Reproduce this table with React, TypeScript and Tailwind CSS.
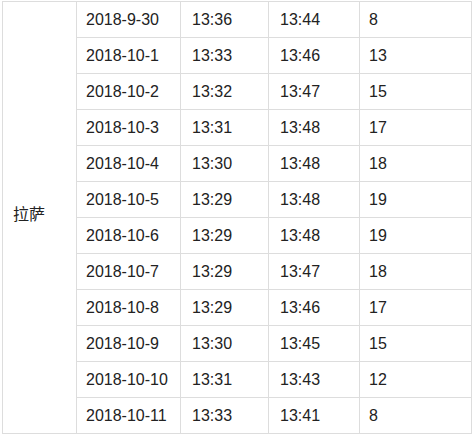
const rows = [
  ["2018-9-30", "13:36", "13:44", "8"],
  ["2018-10-1", "13:33", "13:46", "13"],
  ["2018-10-2", "13:32", "13:47", "15"],
  ["2018-10-3", "13:31", "13:48", "17"],
  ["2018-10-4", "13:30", "13:48", "18"],
  ["2018-10-5", "13:29", "13:48", "19"],
  ["2018-10-6", "13:29", "13:48", "19"],
  ["2018-10-7", "13:29", "13:47", "18"],
  ["2018-10-8", "13:29", "13:46", "17"],
  ["2018-10-9", "13:30", "13:45", "15"],
  ["2018-10-10", "13:31", "13:43", "12"],
  ["2018-10-11", "13:33", "13:41", "8"],
];

export default function App() {
  return (
    <div className="bg-white w-[475px] h-[437px] overflow-hidden pt-px pl-[2px]">
      <div
        className="grid grid-cols-[74px_104px_88px_91px_112px] auto-rows-[36px] w-[470px] border-l border-t border-[#dddddd] text-[16px] text-[#222] leading-none"
        style={{ fontFamily: '"Liberation Sans", Arial, "Noto Sans CJK SC", sans-serif' }}
      >
        <div className="row-span-12 flex items-center pl-[10px] border-r border-b border-[#dddddd] pb-[5px]">
          拉萨
        </div>
        {rows.map((row) => (
          <div key={row[0]} className="contents">
            <div className="flex items-center pl-[9px] border-r border-b border-[#dddddd]">{row[0]}</div>
            <div className="flex items-center pl-[11px] border-r border-b border-[#dddddd]">{row[1]}</div>
            <div className="flex items-center pl-[11px] border-r border-b border-[#dddddd]">{row[2]}</div>
            <div className="flex items-center pl-[9px] border-r border-b border-[#dddddd]">{row[3]}</div>
          </div>
        ))}
      </div>
    </div>
  );
}
